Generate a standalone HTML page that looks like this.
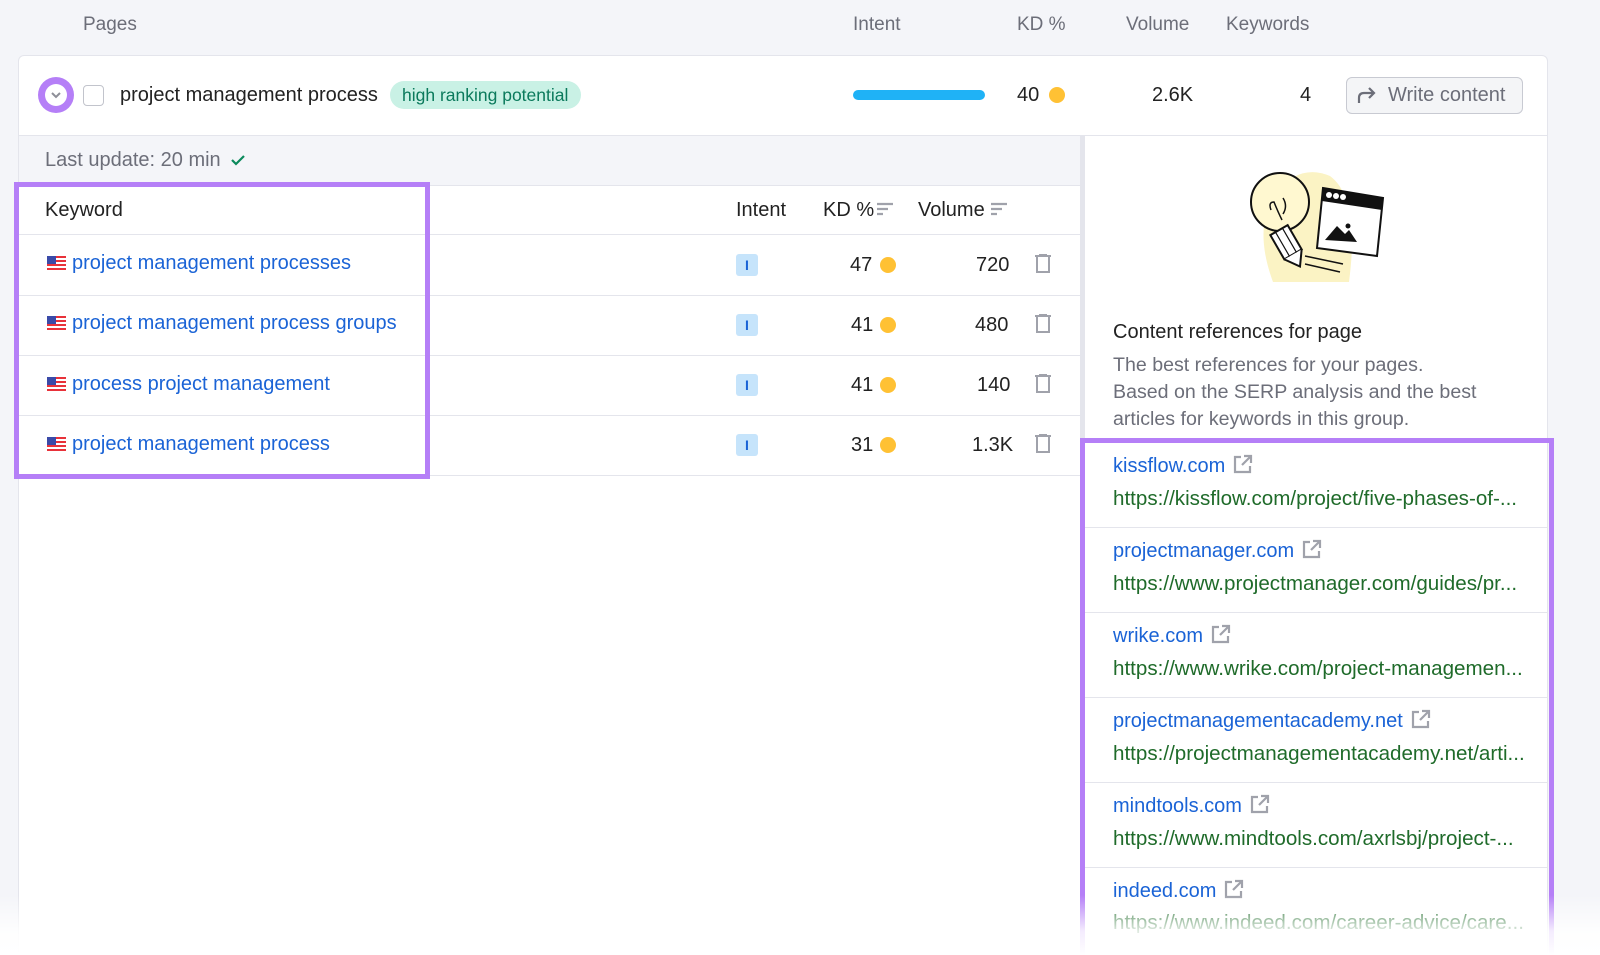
<!DOCTYPE html>
<html><head><meta charset="utf-8"><style>
*{margin:0;padding:0;box-sizing:border-box}
html,body{width:1600px;height:955px;overflow:hidden}
body{background:#f4f5f9;font-family:"Liberation Sans",sans-serif;position:relative;color:#333}
.a{position:absolute;white-space:nowrap;line-height:24px;font-size:20px}
.hd{color:#6c6e79;font-size:19px}
.lnk{color:#1a63d6}
.url{color:#1f6b2a;font-size:20.6px}
.gr{color:#6c6e79}
.dot{position:absolute;width:16px;height:16px;border-radius:50%;background:#ffc134}
.hl{position:absolute;height:1px;background:#e4e5ec}
.flag{position:absolute;width:19px;height:14px;background:repeating-linear-gradient(#e8323a 0 2px,#fff 2px 4px)}
.flag:before{content:"";position:absolute;left:0;top:0;width:9px;height:8px;background:#3a4aa8}
.ib{position:absolute;width:22px;height:22px;background:#c6e4fb;border-radius:3px;color:#1a63d6;font-size:14px;font-weight:bold;text-align:center;line-height:22px}
.ext{display:inline-block;width:20px;height:20px;vertical-align:-2px;margin-left:8px}
</style></head><body>
<div class="a hd" style="left:83px;top:13px">Pages</div>
<div class="a hd" style="left:853px;top:13px">Intent</div>
<div class="a hd" style="left:1017px;top:13px">KD %</div>
<div class="a hd" style="left:1126px;top:13px">Volume</div>
<div class="a hd" style="left:1226px;top:13px">Keywords</div>

<div style="position:absolute;left:18px;top:55px;width:1530px;height:920px;background:#fff;border:1px solid #e4e5ec;border-radius:6px"></div>
<div style="position:absolute;left:38px;top:77px;width:36px;height:36px;border-radius:50%;background:#b57ff7"></div>
<div style="position:absolute;left:45px;top:84px;width:22px;height:22px;border-radius:50%;background:#fff"></div>
<svg style="position:absolute;left:48px;top:87px" width="16" height="16"><path d="M4 6l4 4 4-4" stroke="#8e8f98" stroke-width="2" fill="none"/></svg>
<div style="position:absolute;left:83px;top:85px;width:21px;height:21px;border:1.5px solid #c2c4cc;border-radius:4px"></div>
<div class="a" style="left:120px;top:83px;color:#222">project management process</div>
<div style="position:absolute;left:390px;top:81px;width:191px;height:28px;border-radius:14px;background:#c9f1e5"></div>
<div class="a" style="left:402px;top:83px;font-size:17.5px;color:#0b7a5c">high ranking potential</div>
<div style="position:absolute;left:853px;top:90px;width:132px;height:10px;border-radius:5px;background:#1fb2f6"></div>
<div class="a" style="left:1017px;top:83px;color:#222">40</div>
<div class="dot" style="left:1049px;top:87px"></div>
<div class="a" style="left:1152px;top:83px;color:#222">2.6K</div>
<div class="a" style="left:1300px;top:83px;color:#222">4</div>
<div style="position:absolute;left:1346px;top:77px;width:177px;height:37px;border:1px solid #c8cad2;border-radius:6px;background:#f4f5f7"></div>
<svg style="position:absolute;left:1355px;top:84px" width="24" height="22"><path d="M4 19v-5q0-5 5-5h10M14 4l5 5-5 5" stroke="#6c6e79" stroke-width="2.2" fill="none"/></svg>
<div class="a" style="left:1388px;top:83px;color:#6c6e79">Write content</div>
<div class="hl" style="left:18px;top:135px;width:1530px"></div>

<div style="position:absolute;left:19px;top:136px;width:1061px;height:50px;background:#f4f5f9"></div>
<div class="a gr" style="left:45px;top:148px">Last update: 20 min</div>
<svg style="position:absolute;left:229px;top:151px" width="18" height="18"><path d="M3 9l4 4 8-8" stroke="#0b8a5c" stroke-width="2.2" fill="none"/></svg>
<div style="position:absolute;left:1080px;top:136px;width:5px;height:820px;background:#e4e5ec"></div>
<div class="hl" style="left:18px;top:185px;width:1062px"></div>
<div class="a" style="left:45px;top:198px;color:#222">Keyword</div>
<div class="a" style="left:736px;top:198px;color:#222">Intent</div>
<div class="a" style="left:823px;top:198px;color:#222">KD %</div>
<svg style="position:absolute;left:877px;top:202px" width="16" height="14"><path d="M0 2h16M0 7h11M0 12h6" stroke="#a0a2ab" stroke-width="2.2"/></svg>
<div class="a" style="left:918px;top:198px;color:#222">Volume</div>
<svg style="position:absolute;left:991px;top:202px" width="16" height="14"><path d="M0 2h16M0 7h11M0 12h6" stroke="#a0a2ab" stroke-width="2.2"/></svg>
<div class="hl" style="left:18px;top:234px;width:1062px"></div>

<div class="flag" style="left:47px;top:256px"></div>
<div class="a lnk" style="left:72px;top:251px">project management processes</div>
<div class="ib" style="left:736px;top:254px">I</div>
<div class="a" style="left:850px;top:253px;color:#222">47</div><div class="dot" style="left:880px;top:257px"></div>
<div class="a" style="left:976px;top:253px;color:#222">720</div>
<svg style="position:absolute;left:1034px;top:254px" width="18" height="20"><path d="M1 2h16M6 2V0h6v2M3 3v15h12V3" stroke="#a0a2ab" stroke-width="2" fill="none"/></svg>
<div class="hl" style="left:18px;top:295px;width:1062px"></div>

<div class="flag" style="left:47px;top:316px"></div>
<div class="a lnk" style="left:72px;top:311px">project management process groups</div>
<div class="ib" style="left:736px;top:314px">I</div>
<div class="a" style="left:851px;top:313px;color:#222">41</div><div class="dot" style="left:880px;top:317px"></div>
<div class="a" style="left:975px;top:313px;color:#222">480</div>
<svg style="position:absolute;left:1034px;top:314px" width="18" height="20"><path d="M1 2h16M6 2V0h6v2M3 3v15h12V3" stroke="#a0a2ab" stroke-width="2" fill="none"/></svg>
<div class="hl" style="left:18px;top:355px;width:1062px"></div>

<div class="flag" style="left:47px;top:377px"></div>
<div class="a lnk" style="left:72px;top:372px">process project management</div>
<div class="ib" style="left:736px;top:374px">I</div>
<div class="a" style="left:851px;top:373px;color:#222">41</div><div class="dot" style="left:880px;top:377px"></div>
<div class="a" style="left:977px;top:373px;color:#222">140</div>
<svg style="position:absolute;left:1034px;top:374px" width="18" height="20"><path d="M1 2h16M6 2V0h6v2M3 3v15h12V3" stroke="#a0a2ab" stroke-width="2" fill="none"/></svg>
<div class="hl" style="left:18px;top:415px;width:1062px"></div>

<div class="flag" style="left:47px;top:437px"></div>
<div class="a lnk" style="left:72px;top:432px">project management process</div>
<div class="ib" style="left:736px;top:434px">I</div>
<div class="a" style="left:851px;top:433px;color:#222">31</div><div class="dot" style="left:880px;top:437px"></div>
<div class="a" style="left:972px;top:433px;color:#222">1.3K</div>
<svg style="position:absolute;left:1034px;top:434px" width="18" height="20"><path d="M1 2h16M6 2V0h6v2M3 3v15h12V3" stroke="#a0a2ab" stroke-width="2" fill="none"/></svg>
<div class="hl" style="left:18px;top:475px;width:1062px"></div>

<div style="position:absolute;left:14px;top:182px;width:416px;height:297px;border:5px solid #b57ff7"></div>

<svg style="position:absolute;left:1245px;top:168px" width="145" height="118" viewBox="0 0 145 118">
<path d="M28 114 Q8 60 30 25 Q55 -5 85 8 Q115 30 104 114 Z" fill="#fbf3c4"/>
<circle cx="35" cy="34" r="29" fill="#fff8d0" stroke="#111" stroke-width="2"/>
<path d="M26 42 q-3-8 3-8 q4 10 8 18 M38 30 q5 8 0 16" stroke="#111" stroke-width="1.5" fill="none"/>
<g transform="rotate(-30 42 76)"><rect x="32" y="60" width="20" height="28" fill="#fff" stroke="#111" stroke-width="2"/><path d="M32 88 L42 102 L52 88" fill="#fff" stroke="#111" stroke-width="2"/><path d="M38 60v28M46 60v28" stroke="#111" stroke-width="1.2"/></g>
<path d="M78 20 L138 30 L132 88 L72 80 Z" fill="#fff" stroke="#111" stroke-width="2"/>
<path d="M78 20 L138 30 L137 42 L77 33 Z" fill="#111"/>
<circle cx="84" cy="27" r="3" fill="#fff"/><circle cx="91" cy="28" r="3" fill="#fff"/><circle cx="98" cy="29" r="3" fill="#fff"/>
<path d="M80 72 L92 58 L100 66 L104 62 L112 74 Z" fill="#111"/>
<circle cx="103" cy="58" r="2.5" fill="#111"/>
<path d="M60 88 L98 96 M60 96 L95 104" stroke="#111" stroke-width="1.5"/>
</svg>
<div class="a" style="left:1113px;top:320px;color:#222">Content references for page</div>
<div class="a gr" style="left:1113px;top:352px;line-height:27px;white-space:normal;width:430px;font-size:19.6px">The best references for your pages.<br>Based on the SERP analysis and the best<br>articles for keywords in this group.</div>

<div class="a lnk" style="left:1113px;top:454px">kissflow.com<svg class="ext" viewBox="0 0 20 20"><path d="M8 3H2v15h15v-6M11 2h7v7M18 2l-9 9" stroke="#a0a2ab" stroke-width="2.2" fill="none"/></svg></div>
<div class="a url" style="left:1113px;top:487px">https://kissflow.com/project/five-phases-of-...</div>
<div class="hl" style="left:1085px;top:527px;width:463px"></div>
<div class="a lnk" style="left:1113px;top:539px">projectmanager.com<svg class="ext" viewBox="0 0 20 20"><path d="M8 3H2v15h15v-6M11 2h7v7M18 2l-9 9" stroke="#a0a2ab" stroke-width="2.2" fill="none"/></svg></div>
<div class="a url" style="left:1113px;top:572px">https://www.projectmanager.com/guides/pr...</div>
<div class="hl" style="left:1085px;top:612px;width:463px"></div>
<div class="a lnk" style="left:1113px;top:624px">wrike.com<svg class="ext" viewBox="0 0 20 20"><path d="M8 3H2v15h15v-6M11 2h7v7M18 2l-9 9" stroke="#a0a2ab" stroke-width="2.2" fill="none"/></svg></div>
<div class="a url" style="left:1113px;top:657px">https://www.wrike.com/project-managemen...</div>
<div class="hl" style="left:1085px;top:697px;width:463px"></div>
<div class="a lnk" style="left:1113px;top:709px">projectmanagementacademy.net<svg class="ext" viewBox="0 0 20 20"><path d="M8 3H2v15h15v-6M11 2h7v7M18 2l-9 9" stroke="#a0a2ab" stroke-width="2.2" fill="none"/></svg></div>
<div class="a url" style="left:1113px;top:742px">https://projectmanagementacademy.net/arti...</div>
<div class="hl" style="left:1085px;top:782px;width:463px"></div>
<div class="a lnk" style="left:1113px;top:794px">mindtools.com<svg class="ext" viewBox="0 0 20 20"><path d="M8 3H2v15h15v-6M11 2h7v7M18 2l-9 9" stroke="#a0a2ab" stroke-width="2.2" fill="none"/></svg></div>
<div class="a url" style="left:1113px;top:827px">https://www.mindtools.com/axrlsbj/project-...</div>
<div class="hl" style="left:1085px;top:867px;width:463px"></div>
<div class="a lnk" style="left:1113px;top:879px">indeed.com<svg class="ext" viewBox="0 0 20 20"><path d="M8 3H2v15h15v-6M11 2h7v7M18 2l-9 9" stroke="#a0a2ab" stroke-width="2.2" fill="none"/></svg></div>
<div class="a url" style="left:1113px;top:911px">https://www.indeed.com/career-advice/care...</div>

<div style="position:absolute;left:1080px;top:438px;width:474px;height:560px;border:5px solid #b57ff7"></div>
<div style="position:absolute;left:0;top:895px;width:1600px;height:60px;background:linear-gradient(rgba(255,255,255,0),rgba(255,255,255,.85) 60%,#fff)"></div>
</body></html>
